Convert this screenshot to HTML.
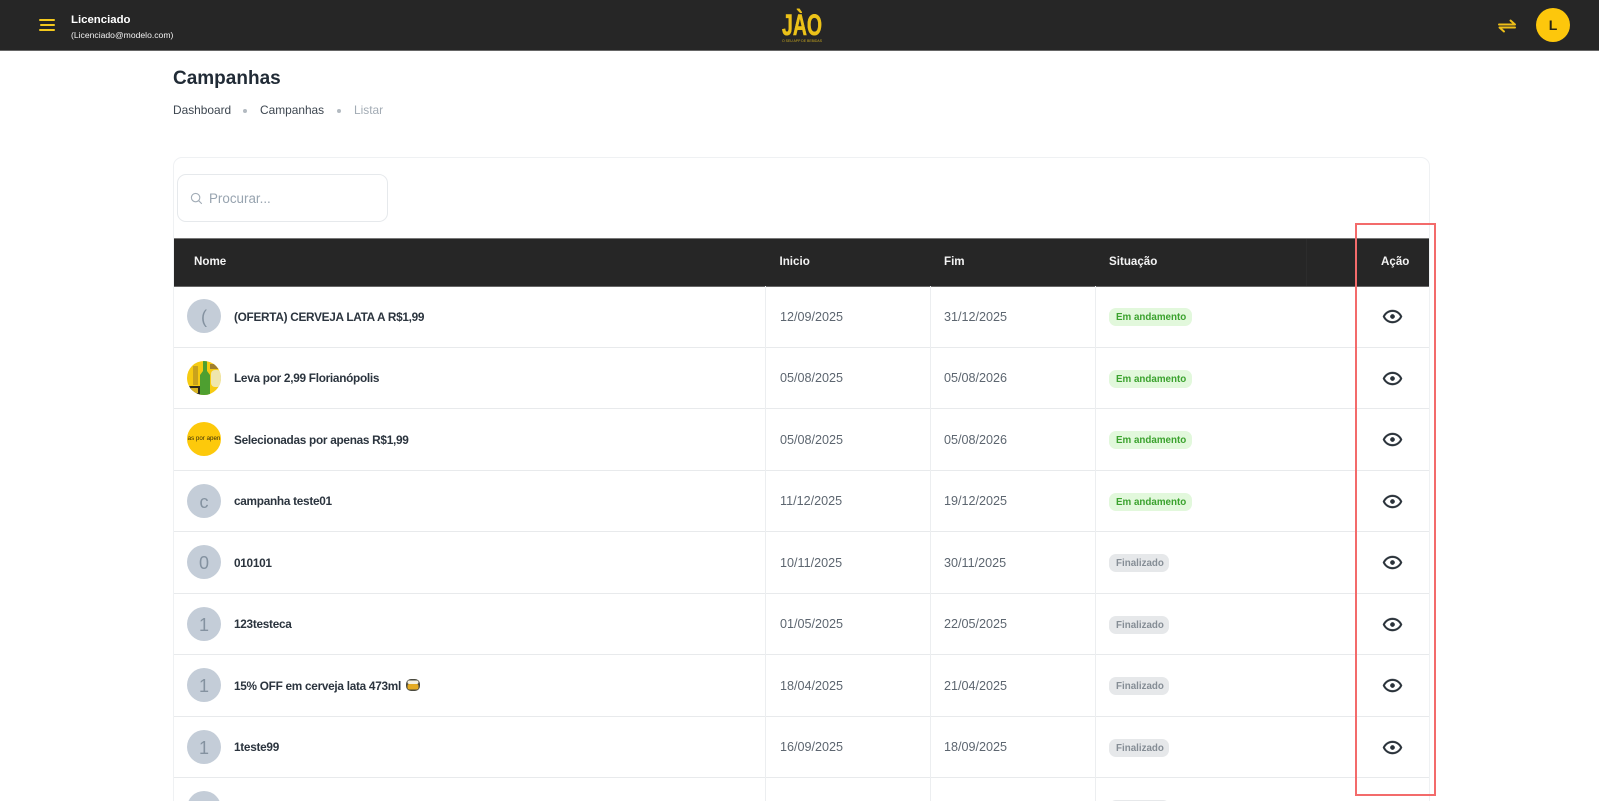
<!DOCTYPE html>
<html lang="pt"><head><meta charset="utf-8"><title>Campanhas</title>
<style>
*{box-sizing:border-box}
html,body{margin:0;padding:0;width:1599px;height:801px;overflow:hidden;background:#fff;font-family:"Liberation Sans",sans-serif;color:#212b36}
#w{position:relative;width:1599px;height:801px;overflow:hidden;background:#fff}
.a{position:absolute;white-space:nowrap}
#top{position:absolute;left:0;top:0;width:1599px;height:51px;background:#262626;border-bottom:1px solid #666}
.r{position:absolute;left:174px;width:1255px;height:61.5px;border-bottom:1px solid #e8eaec}
.r>.n{position:absolute;left:60px;top:22.4px;font-size:11.8px;letter-spacing:-.28px;font-weight:bold;line-height:16px;white-space:nowrap;color:#2b343e}
.r>.d{position:absolute;top:22.4px;font-size:12.6px;line-height:16px;color:#5d6670}
.r>.av{position:absolute;left:13px;top:13px;width:34px;height:34px;border-radius:50%;background:#c4cdd8;color:#8492a0;font-size:18px;line-height:36px;text-align:center}
.r>.ch{position:absolute;left:935px;top:22px;height:18px;border-radius:7px;font-size:9.8px;font-weight:bold;line-height:19px;padding:0 5.5px 0 7px;white-space:nowrap}
.g{background:#e2f8dc;color:#3ba22e}
.f{background:#e6e8ea;color:#858d95}
.r>svg.e{position:absolute;left:1207.5px;top:20px;width:21px;height:21px;fill:#2a323a;stroke:#2a323a;stroke-width:.4}
.v{position:absolute;top:286px;height:515px;width:1px;background:#eceef0}
.h{position:absolute;top:238px;height:48px;line-height:48px;font-size:11.6px;font-weight:bold;color:#f3f3f3;white-space:nowrap}
</style></head><body>
<div id="w">
<svg width="0" height="0" style="position:absolute"><defs><symbol id="eye" viewBox="0 0 24 24"><path d="M12,9.5A2.5,2.5 0 0,1 14.5,12A2.5,2.5 0 0,1 12,14.5A2.5,2.5 0 0,1 9.5,12A2.5,2.5 0 0,1 12,9.5M12,4.5C17,4.5 21.27,7.61 23,12C21.27,16.39 17,19.5 12,19.5C7,19.5 2.73,16.39 1,12C2.73,7.61 7,4.5 12,4.5M3.18,12C4.83,15.36 8.24,17.5 12,17.5C15.76,17.5 19.17,15.36 20.82,12C19.17,8.64 15.76,6.5 12,6.5C8.24,6.5 4.83,8.64 3.18,12Z"/></symbol></defs></svg>

<div id="top"></div>
<svg class="a" style="left:39px;top:18px" width="17" height="14" viewBox="0 0 17 14"><g fill="#f4c91d"><rect x="0" y="1" width="16" height="2" rx="1"/><rect x="1" y="6" width="15" height="2" rx="1"/><rect x="0" y="11" width="16" height="2" rx="1"/></g></svg>
<div class="a" style="left:71px;top:11.5px;font-size:11.4px;font-weight:bold;line-height:16px;color:#fff">Licenciado</div>
<div class="a" style="left:71px;top:28px;font-size:8.6px;line-height:14px;color:#f2f2f2">(Licenciado@modelo.com)</div>

<svg class="a" style="left:770px;top:0" width="60" height="50" viewBox="0 0 60 50">
<text x="12" y="35" font-family="Liberation Sans" font-weight="bold" font-size="30" fill="#ecc219" stroke="#ecc219" stroke-width=".6" textLength="40" lengthAdjust="spacingAndGlyphs">JÀO</text>
<text x="12" y="42" font-family="Liberation Sans" font-size="3.4" fill="#c9a81f" textLength="40" lengthAdjust="spacingAndGlyphs">O SEU APP DE BEBIDAS</text>
</svg>

<svg class="a" style="left:1498px;top:19px" width="19" height="14" viewBox="0 0 19 14" fill="none" stroke="#eebf18" stroke-width="2" stroke-linecap="round" stroke-linejoin="round"><path d="M1 5.5H17L12.5 1.5"/><path d="M17 8.5H1.5L6 12.5"/></svg>
<div class="a" style="left:1536px;top:8px;width:34px;height:34px;border-radius:50%;background:#fdc70c;color:#2a2412;font-size:14px;font-weight:bold;line-height:34px;text-align:center">L</div>

<div class="a" style="left:173px;top:66.5px;font-size:19px;font-weight:bold;line-height:24px;color:#212b36">Campanhas</div>
<div class="a" style="left:173px;top:102px;font-size:11.9px;line-height:16px;color:#3d4650">Dashboard</div>
<div class="a" style="left:243px;top:108.5px;width:4px;height:4px;border-radius:50%;background:#b3bac1"></div>
<div class="a" style="left:260px;top:102px;font-size:11.9px;line-height:16px;color:#3d4650">Campanhas</div>
<div class="a" style="left:336.5px;top:108.5px;width:4px;height:4px;border-radius:50%;background:#b3bac1"></div>
<div class="a" style="left:354px;top:102px;font-size:11.9px;line-height:16px;color:#a2abb4">Listar</div>

<div class="a" style="left:173px;top:157px;width:1257px;height:660px;border:1px solid #eff1f3;border-radius:9px"></div>
<div class="a" style="left:177px;top:174px;width:211px;height:48px;border:1px solid #e6e9ec;border-radius:9px"></div>
<svg class="a" style="left:190px;top:192px" width="13" height="13" viewBox="0 0 13 13" fill="none" stroke="#a3adb7" stroke-width="1.1"><circle cx="5.6" cy="5.6" r="4.2"/><path d="M8.8 8.8L11.5 11.5" stroke-linecap="round"/></svg>
<div class="a" style="left:209px;top:189.5px;font-size:13.4px;line-height:18px;color:#98a4b0">Procurar...</div>

<div class="a" style="left:174px;top:238px;width:1255px;height:49px;background:#262626;border-top:1px solid #777;border-bottom:1px solid #666"></div>
<div class="a" style="left:1306px;top:239px;width:1px;height:47px;background:#2c2c2c"></div>
<div class="h" style="left:194px">Nome</div>
<div class="h" style="left:779.5px">Inicio</div>
<div class="h" style="left:944px">Fim</div>
<div class="h" style="left:1109px">Situação</div>
<div class="h" style="left:1381px">Ação</div>

<div class="r" style="top:286.2px"><div class="av">(</div><div class="n">(OFERTA) CERVEJA LATA A R$1,99</div><div class="d" style="left:606px">12/09/2025</div><div class="d" style="left:770px">31/12/2025</div><div class="ch g">Em andamento</div><svg class="e"><use href="#eye"/></svg></div>

<div class="r" style="top:347.7px">
<svg class="a" style="left:13px;top:13px" width="34" height="34" viewBox="0 0 34 34"><defs><clipPath id="c1"><circle cx="17" cy="17" r="17"/></clipPath></defs><g clip-path="url(#c1)"><rect width="34" height="34" fill="#f6cb12"/><rect x="6" y="5" width="5" height="19" fill="#c9a31c"/><path d="M13 34V14l3-4V0h4v10l3 4v20z" fill="#4e9f30"/><rect x="23" y="3" width="11" height="5" fill="#a1802e"/><rect x="24" y="9" width="10" height="17" rx="4" fill="#efe6ad"/><rect x="0" y="25" width="13" height="9" fill="#2c2a1c"/><rect x="4" y="27" width="7" height="5" fill="#d8b424"/></g></svg>
<div class="n">Leva por 2,99 Florianópolis</div><div class="d" style="left:606px">05/08/2025</div><div class="d" style="left:770px">05/08/2026</div><div class="ch g">Em andamento</div><svg class="e"><use href="#eye"/></svg></div>

<div class="r" style="top:409.2px"><div class="av" style="background:#fdc90b;color:#3a2f08;font-size:6.2px;line-height:34px;overflow:hidden;white-space:nowrap">as por apen</div><div class="n">Selecionadas por apenas R$1,99</div><div class="d" style="left:606px">05/08/2025</div><div class="d" style="left:770px">05/08/2026</div><div class="ch g">Em andamento</div><svg class="e"><use href="#eye"/></svg></div>

<div class="r" style="top:470.7px"><div class="av">c</div><div class="n">campanha teste01</div><div class="d" style="left:606px">11/12/2025</div><div class="d" style="left:770px">19/12/2025</div><div class="ch g">Em andamento</div><svg class="e"><use href="#eye"/></svg></div>

<div class="r" style="top:532.2px"><div class="av">0</div><div class="n">010101</div><div class="d" style="left:606px">10/11/2025</div><div class="d" style="left:770px">30/11/2025</div><div class="ch f">Finalizado</div><svg class="e"><use href="#eye"/></svg></div>

<div class="r" style="top:593.7px"><div class="av">1</div><div class="n">123testeca</div><div class="d" style="left:606px">01/05/2025</div><div class="d" style="left:770px">22/05/2025</div><div class="ch f">Finalizado</div><svg class="e"><use href="#eye"/></svg></div>

<div class="r" style="top:655.2px"><div class="av">1</div><div class="n">15% OFF em cerveja lata 473ml</div>
<svg class="a" style="left:231px;top:23px" width="16" height="14" viewBox="0 0 16 14"><rect x="1" y="1" width="14" height="12" rx="5" fill="#4a4a40"/><rect x="2.5" y="2.5" width="11" height="3.5" rx="1.7" fill="#f4f1e2"/><rect x="2.5" y="6" width="11" height="5.5" rx="2" fill="#e4ab22"/></svg>
<div class="d" style="left:606px">18/04/2025</div><div class="d" style="left:770px">21/04/2025</div><div class="ch f">Finalizado</div><svg class="e"><use href="#eye"/></svg></div>

<div class="r" style="top:716.7px"><div class="av">1</div><div class="n">1teste99</div><div class="d" style="left:606px">16/09/2025</div><div class="d" style="left:770px">18/09/2025</div><div class="ch f">Finalizado</div><svg class="e"><use href="#eye"/></svg></div>

<div class="r" style="top:778.2px;border-bottom:0"><div class="av"></div><div class="ch f" style="width:61px"></div></div>

<div class="v" style="left:765px"></div>
<div class="v" style="left:930px"></div>
<div class="v" style="left:1095px"></div>

<div class="a" style="left:1355px;top:223px;width:81px;height:573px;border:2px solid #f36b6b"></div>
</div>
</body></html>
